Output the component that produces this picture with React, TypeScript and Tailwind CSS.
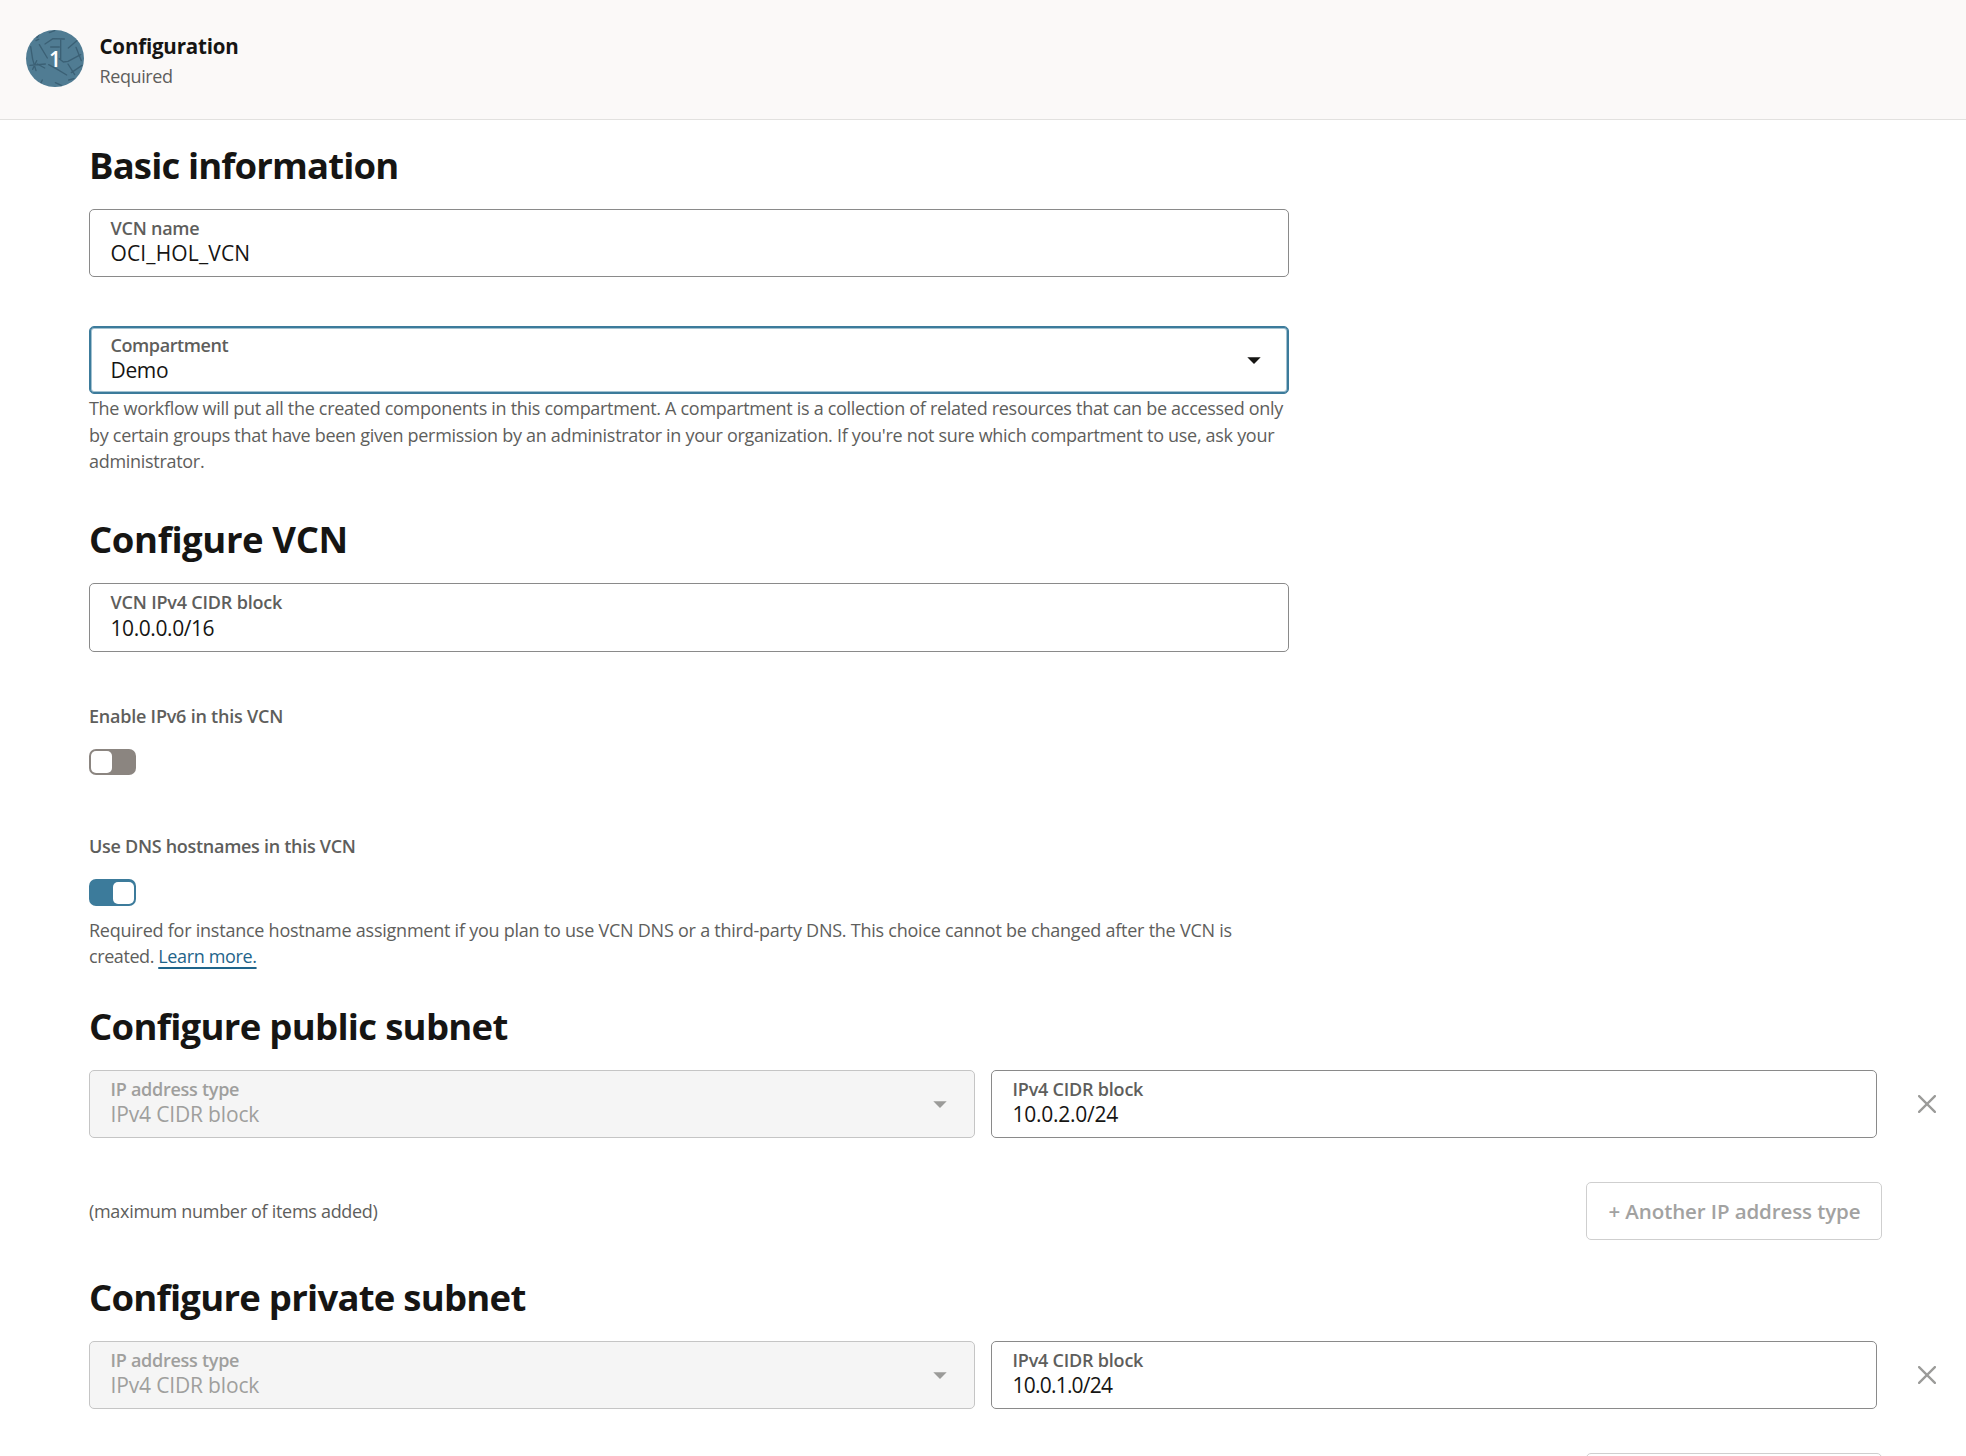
import React from 'react';
import { clsx } from 'clsx';

function Caret({ className }: { className?: string }) {
  return (
    <svg className={clsx('h-[7px] w-[14px] shrink-0', className)} viewBox="0 0 14 7" fill="currentColor">
      <path d="M0.3 0.2h13.4L7 6.9z" />
    </svg>
  );
}

type FieldProps = {
  label: string;
  value: string;
  labelTracking: string;
  valueTracking: string;
  size?: string;
  valueClass?: string;
  state?: 'normal' | 'focused' | 'disabled';
  select?: boolean;
};

function Field({ label, value, labelTracking, valueTracking, size = 'h-[68px] w-[1200px]', valueClass, state = 'normal', select }: FieldProps) {
  return (
    <div
      className={clsx(
        'flex items-center justify-between rounded-[5px] border pl-[20.5px]',
        size,
        select && 'pr-[27px]',
        state === 'normal' && 'border-[#8a8a8a] bg-white',
        state === 'focused' && 'border-[#3c7b9b] bg-white shadow-[inset_0_0_0_1px_#3c7b9b,inset_0_0_0_2px_#a3c2d1]',
        state === 'disabled' && 'border-[#c5c5c5] bg-[#f5f5f5]',
      )}
    >
      <div className="self-start pt-1.5 whitespace-nowrap">
        <div className={clsx('text-[18px] leading-6 font-semibold', labelTracking, state === 'disabled' ? 'text-[#9f9f9d]' : 'text-[#5e5e5c]')}>
          {label}
        </div>
        <div className={clsx('text-[21px] leading-[26px]', valueTracking, valueClass, state === 'disabled' ? 'text-[#9f9f9d]' : 'text-[#161513]')}>
          {value}
        </div>
      </div>
      {select && <Caret className={state === 'disabled' ? 'text-[#9b9b99]' : 'text-[#161513]'} />}
    </div>
  );
}

function Heading({ children, className }: { children: React.ReactNode; className?: string }) {
  return <h2 className={clsx('text-[36.5px] leading-[44px] font-bold text-[#161513]', className)}>{children}</h2>;
}

function StepBadge() {
  return (
    <div className="relative h-[57px] w-[58px] overflow-hidden rounded-full bg-[#507c93]">
      <svg
        className="absolute inset-0 h-[57px] w-[58px]"
        viewBox="78 90 174 171"
        fill="none"
        stroke="#3b6075"
        strokeWidth="4"
        strokeLinecap="round"
        strokeLinejoin="round"
      >
        <path d="M148 98l16-6M100 106l12 6 5-10M108 122l8-4M135 132l24-16 34 1M182 118v62M152 141h26M205 144l27-23M178 176l12 10 14-2 38-20" />
        <path d="M118 134l24 40M92 140l6 38 10 34M90 196l46-4M98 208l12-26M112 192l22 12M146 194l26 14 28 17M228 142l16 40M204 192l20 32M214 218l32-22M127 240l-5 10M166 248l18 8M206 240l16-4" />
      </svg>
      <div className="absolute inset-0 flex items-center justify-center pt-0.5 text-[21px] leading-none font-semibold text-white">1</div>
    </div>
  );
}

function SubnetSection({ title, titleClass, cidr, cidrTracking }: { title: string; titleClass: string; cidr: string; cidrTracking: string }) {
  return (
    <section>
      <Heading className={titleClass}>{title}</Heading>
      <div className="mt-[22px] flex items-center">
        <Field
          label="IP address type"
          value="IPv4 CIDR block"
          labelTracking="tracking-[-0.27px]"
          valueTracking="tracking-[-0.16px]"
          size="h-[68px] w-[886px]"
          state="disabled"
          select
        />
        <div className="w-4" />
        <Field
          label="IPv4 CIDR block"
          value={cidr}
          labelTracking="tracking-[-0.21px]"
          valueTracking={cidrTracking}
          size="h-[68px] w-[886px]"
        />
        <svg className="ml-[40.5px] h-[18px] w-[18px]" viewBox="0 0 18 18" fill="none" stroke="#9b9b99" strokeWidth="2.3" strokeLinecap="round">
          <path d="M1.1 1.1l15.8 15.8M16.9 1.1L1.1 16.9" />
        </svg>
      </div>
      <div className="mt-11 flex w-[1793px] items-center justify-between">
        <span className="text-[18px] tracking-[-0.3px] text-[#5e5e5c]">(maximum number of items added)</span>
        <button
          disabled
          className="h-[58px] w-[296px] rounded-[5px] border border-[#cfcfcf] pl-px text-[20.5px] font-semibold tracking-[-0.1px] whitespace-nowrap text-[#a2a2a1]"
        >
          + Another IP address type
        </button>
      </div>
    </section>
  );
}

export default function App() {
  return (
    <div className="h-[1456px] w-[1966px] overflow-hidden bg-white font-['Open_Sans','Noto_Sans',sans-serif]">
      <header className="flex h-[120px] gap-[15.5px] border-b border-[#e2e1df] bg-[#fbf9f8] pt-[30px] pl-[26px]">
        <StepBadge />
        <div className="whitespace-nowrap">
          <div className="text-[20.5px] leading-8 font-bold tracking-[-0.19px] text-[#161513]">Configuration</div>
          <div className="text-[18px] leading-7 tracking-[-0.4px] text-[#5e5e5c]">Required</div>
        </div>
      </header>

      <main className="pt-[23px] pl-[89px]">
        <section>
          <Heading className="tracking-[-0.86px]">Basic information</Heading>
          <div className="mt-[22px]">
            <Field label="VCN name" value="OCI_HOL_VCN" labelTracking="tracking-[-0.24px]" valueTracking="tracking-[0.14px]" />
          </div>
          <div className="mt-[49px]">
            <Field label="Compartment" value="Demo" labelTracking="tracking-[-0.4px]" valueTracking="tracking-[-0.35px]" state="focused" select />
          </div>
          <p className="mt-px w-[1200px] text-[18px] leading-[26.5px] tracking-[-0.298px] text-[#5e5e5c]">
            The workflow will put all the created components in this compartment. A compartment is a collection of related resources that can
            be accessed only by certain groups that have been given permission by an administrator in your organization. If you're not sure
            which compartment to use, ask your administrator.
          </p>
        </section>

        <section className="mt-[42.5px]">
          <Heading className="tracking-[-0.4px]">Configure VCN</Heading>
          <div className="mt-[22px]">
            <Field
              label="VCN IPv4 CIDR block"
              value="10.0.0.0/16"
              labelTracking="tracking-[-0.19px]"
              valueTracking="tracking-[-0.42px]"
              size="h-[69px] w-[1200px]"
              valueClass="mt-px"
            />
          </div>

          <div className="mt-[52px] text-[18px] leading-6 font-semibold tracking-[-0.225px] text-[#5e5e5c]">Enable IPv6 in this VCN</div>
          <div className="mt-[21px] flex h-[26px] w-[47px] items-center justify-start rounded-[7px] bg-[#8b8580] px-0.5">
            <div className="h-[22px] w-[21px] rounded-[5px] bg-white" />
          </div>

          <div className="mt-[59px] text-[18px] leading-6 font-semibold tracking-[-0.29px] text-[#5e5e5c]">Use DNS hostnames in this VCN</div>
          <div className="mt-[21px] flex h-[27px] w-[47px] items-center justify-end rounded-[7px] bg-[#3c7b9b] px-0.5">
            <div className="h-[22px] w-[21px] rounded-[5px] bg-white" />
          </div>
          <p className="mt-[10.5px] w-[1200px] text-[18px] leading-[26.5px] tracking-[-0.24px] text-[#5e5e5c]">
            Required for instance hostname assignment if you plan to use VCN DNS or a third-party DNS. This choice cannot be changed after the
            VCN is <span className="tracking-[-0.42px]">created. </span>
            <a className="tracking-[-0.36px] text-[#1f648a] underline decoration-2 underline-offset-[4px] [text-decoration-skip-ink:none]">
              Learn more.
            </a>
          </p>
        </section>

        <div className="mt-[34.5px] flex flex-col gap-[35px]">
          <SubnetSection title="Configure public subnet" titleClass="tracking-[-0.7px]" cidr="10.0.2.0/24" cidrTracking="tracking-[-0.25px]" />
          <SubnetSection title="Configure private subnet" titleClass="tracking-[-0.75px]" cidr="10.0.1.0/24" cidrTracking="tracking-[-0.78px]" />
        </div>
      </main>
    </div>
  );
}
